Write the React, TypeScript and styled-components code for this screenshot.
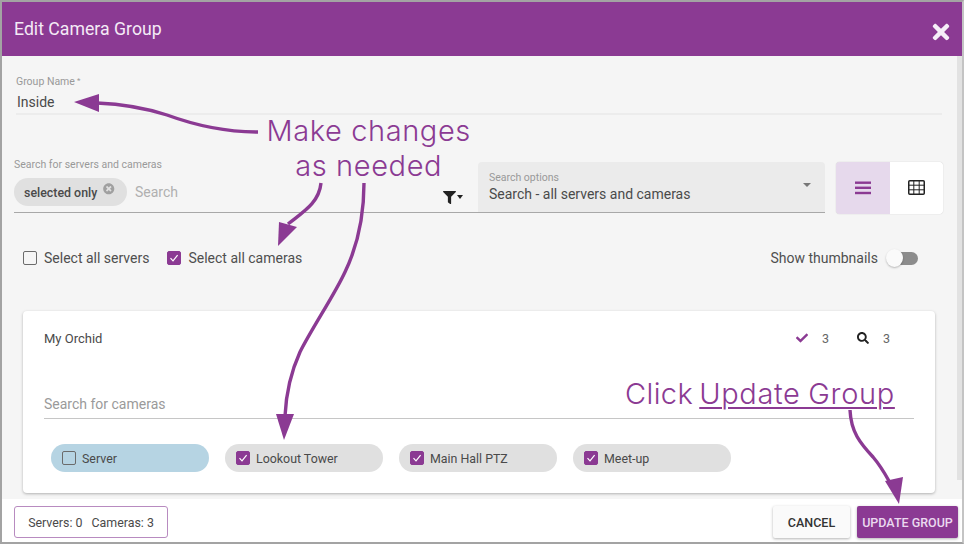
import * as React from 'react';
import styled, { createGlobalStyle } from 'styled-components';
import { FaCheck, FaFilter, FaSearch, FaTimes, FaTimesCircle } from 'react-icons/fa';

const PURPLE = '#8b3a93';

const GlobalStyle = createGlobalStyle`
  html, body {
    margin: 0;
    padding: 0;
    background: #fff;
  }
  body {
    font-family: Roboto, "Liberation Sans", sans-serif;
    color: #444;
  }
`;

const Frame = styled.div`
  position: relative;
  box-sizing: border-box;
  width: 964px;
  height: 544px;
  border: 2px solid #a3a3a3;
  border-right-color: #c4c4c4;
  display: flex;
  flex-direction: column;
  overflow: hidden;
`;

const Header = styled.header`
  flex: none;
  height: 54px;
  background: ${PURPLE};
  color: #f4eaf6;
  display: flex;
  align-items: center;
  justify-content: space-between;
  padding: 0 11px 0 12px;
  font-size: 17.7px;
`;

const CloseIcon = styled(FaTimes)`
  font-size: 24px;
  margin-top: 5px;
  margin-right: -2px;
  color: #f6eef8;
`;

const Body = styled.div`
  flex: 1;
  min-height: 0;
  display: flex;
  background: #f5f5f5;
`;

const Content = styled.main`
  flex: 1;
  min-width: 0;
  display: flex;
  flex-direction: column;
`;

const Scrollbar = styled.div`
  flex: none;
  width: 5px;
  margin-bottom: 19px;
  background: #e2e2e2;
`;

const GroupField = styled.div`
  margin: 19px 15px 0 14px;
  border-bottom: 2px solid #ececec;
`;

const SmallLabel = styled.div`
  font-size: 10.5px;
  line-height: 14px;
  color: #999;
`;

const Asterisk = styled.span`
  font-size: 8px;
  line-height: 0;
  vertical-align: 2px;
  margin-left: 2px;
`;

const GroupValue = styled.div`
  height: 24px;
  line-height: 27px;
  font-size: 14px;
  padding-left: 1px;
  color: #4a4a4a;
`;

const SearchRow = styled.div`
  margin: 47px 0 0 12px;
  display: flex;
  align-items: flex-start;
`;

const SearchField = styled.div`
  box-sizing: border-box;
  width: 464px;
  height: 55px;
  margin-top: -4px;
  border-bottom: 1px solid #a8a8a8;
`;

const SearchInputRow = styled.div`
  display: flex;
  align-items: center;
  margin-top: 6px;
  height: 28px;
`;

const FilterChip = styled.span`
  box-sizing: border-box;
  width: 113px;
  height: 28px;
  border-radius: 14px;
  background: #e0e0e0;
  padding-left: 10px;
  display: flex;
  align-items: center;
  gap: 6px;
  font-size: 12.4px;
  font-weight: 500;
  color: #4a4a4a;
`;

const ChipClose = styled(FaTimesCircle)`
  font-size: 11.5px;
  color: #a0a0a0;
  margin-top: -6px;
`;

const Placeholder = styled.span`
  font-size: 14px;
  color: #b0b0b0;
  margin-left: 8px;
`;

const FilterButton = styled.span`
  margin: 10px 15px 0 auto;
  display: flex;
  align-items: center;
  gap: 1px;
  color: #222;
  font-size: 13px;
`;

const Caret = styled.span<{ $color: string; $size: number }>`
  width: 0;
  height: 0;
  border-left: ${p => p.$size}px solid transparent;
  border-right: ${p => p.$size}px solid transparent;
  border-top: ${p => p.$size + 0.5}px solid ${p => p.$color};
`;

const SelectField = styled.div`
  box-sizing: border-box;
  width: 347px;
  height: 51px;
  padding: 9px 14px 0 11px;
  background: #ebebeb;
  border-bottom: 1px solid #a8a8a8;
  border-radius: 4px 4px 0 0;
  display: flex;
  align-items: flex-start;
  justify-content: space-between;
`;

const SelectValue = styled.div`
  font-size: 14px;
  line-height: 18px;
  color: #4a4a4a;
`;

const SelectCaret = styled.div`
  margin-top: 12px;
  display: flex;
`;

const ViewToggle = styled.div`
  margin-left: 11px;
  width: 107px;
  height: 52px;
  display: flex;
  border-radius: 4px;
  overflow: hidden;
  box-shadow: 0 0 1px rgba(0, 0, 0, 0.3);
`;

const ViewButton = styled.span<{ $active?: boolean }>`
  flex: 1;
  display: flex;
  align-items: center;
  justify-content: center;
  background: ${p => (p.$active ? '#e6d9ec' : '#fff')};
  padding-bottom: 1px;
`;

const CheckRow = styled.div`
  margin-top: 34px;
  height: 20px;
  padding: 0 39px 0 21px;
  display: flex;
  align-items: center;
  font-size: 14px;
  color: #4f4f4f;
`;

const CheckLabel = styled.label`
  display: flex;
  align-items: center;
  gap: 7px;
  margin-right: 18px;
`;

const Box = styled.span<{ $checked?: boolean }>`
  box-sizing: border-box;
  flex: none;
  width: 14px;
  height: 14px;
  border-radius: 2px;
  border: ${p => (p.$checked ? `1px solid ${PURPLE}` : '1.5px solid #6b6b6b')};
  background: ${p => (p.$checked ? PURPLE : 'transparent')};
  display: flex;
  align-items: center;
  justify-content: center;
`;

const ThumbLabel = styled.span`
  margin-left: auto;
  margin-right: 12px;
`;

const SwitchTrack = styled.span`
  position: relative;
  width: 28px;
  height: 13px;
  border-radius: 7px;
  background: #8c8c8c;
`;

const SwitchThumb = styled.span`
  position: absolute;
  left: -4px;
  top: -3px;
  width: 17px;
  height: 18px;
  border-radius: 50%;
  background: #fafafa;
  box-shadow: 0 1px 2px rgba(0, 0, 0, 0.25);
`;

const Card = styled.section`
  box-sizing: border-box;
  margin: 43px 0 0 21px;
  width: 912px;
  height: 182px;
  padding: 16px 21px 0;
  background: #fff;
  border-radius: 4px;
  box-shadow: 0 1px 3px rgba(0, 0, 0, 0.28);
`;

const CardHead = styled.div`
  height: 22px;
  display: flex;
  align-items: center;
  justify-content: space-between;
  font-size: 13px;
  color: #4a4a4a;
`;

const Stats = styled.div`
  display: flex;
  align-items: center;
  padding-right: 24px;
  font-size: 12.5px;
  color: #666;
`;

const Stat = styled.span`
  display: flex;
  align-items: center;
  gap: 14px;
  margin-left: 28px;
`;

const CameraSearch = styled.div`
  margin-top: 41px;
  height: 29px;
  box-sizing: border-box;
  border-bottom: 1px solid #c6c6c6;
  font-size: 14px;
  line-height: 28px;
  color: #9a9a9a;
`;

const ChipRow = styled.div`
  margin: 25px 0 0 7px;
  display: flex;
  gap: 16px;
`;

const CameraChip = styled.span<{ $server?: boolean }>`
  box-sizing: border-box;
  width: 158px;
  height: 28px;
  border-radius: 14px;
  padding-left: 11px;
  display: flex;
  align-items: center;
  gap: 6px;
  background: ${p => (p.$server ? '#b6d4e3' : '#e0e0e0')};
  font-size: 12.4px;
  color: #4a4a4a;
`;

const Footer = styled.footer`
  flex: none;
  height: 43px;
  background: #fff;
  padding: 7px 4px 0 12px;
  box-sizing: border-box;
  display: flex;
  align-items: flex-start;
`;

const Summary = styled.div`
  box-sizing: border-box;
  width: 154px;
  height: 32px;
  border: 1px solid #b88bc0;
  border-radius: 3px;
  display: flex;
  align-items: center;
  justify-content: center;
  gap: 9px;
  font-size: 12.4px;
  color: #4a4a4a;
`;

const Button = styled.button<{ $primary?: boolean }>`
  height: 32px;
  border: 0;
  border-radius: 2px;
  font-family: inherit;
  font-size: 12.5px;
  font-weight: 500;
  padding: 1px 0 0;
  background: ${p => (p.$primary ? PURPLE : '#fafafa')};
  color: ${p => (p.$primary ? '#ead9ef' : '#333')};
  box-shadow: 0 1px 3px rgba(0, 0, 0, 0.3);
`;

const CancelButton = styled(Button)`
  margin-left: auto;
  width: 77px;
`;

const UpdateButton = styled(Button)`
  margin-left: 7px;
  width: 101px;
`;

const Arrows = styled.svg`
  position: absolute;
  left: -2px;
  top: -2px;
  width: 964px;
  height: 544px;
  pointer-events: none;
`;

const Callout = styled.div<{ $left: number; $top: number }>`
  position: absolute;
  left: ${p => p.$left}px;
  top: ${p => p.$top}px;
  font-family: Inter, "Liberation Sans", sans-serif;
  font-weight: 300;
  font-size: 29px;
  line-height: 35px;
  letter-spacing: 0.6px;
  text-align: center;
  white-space: nowrap;
  color: ${PURPLE};
`;

const ClickCallout = styled(Callout)`
  letter-spacing: 0.4px;
  word-spacing: -2.5px;
`;

const CalloutLink = styled.span`
  text-decoration: underline;
  text-decoration-thickness: 2px;
  text-underline-offset: 3px;
  letter-spacing: 0.65px;
  word-spacing: -1px;
`;

const Tick = () => (
  <svg width="10" height="10" viewBox="0 0 10 10" fill="none" stroke="#fff" strokeWidth="1.2">
    <path d="M1.5 5.2 L4 7.8 L8.6 2.2" />
  </svg>
);

const ListIcon = () => (
  <svg width="16" height="14" viewBox="0 0 16 14" fill={PURPLE}>
    <rect x="0" y="0.5" width="16" height="2.4" />
    <rect x="0" y="5.6" width="16" height="2.4" />
    <rect x="0" y="10.8" width="16" height="2.4" />
  </svg>
);

const GridIcon = () => (
  <svg width="17" height="15" viewBox="0 0 17 15" fill="none" stroke="#222">
    <rect x="0.75" y="0.75" width="15.5" height="13.5" rx="1" strokeWidth="1.5" />
    <path d="M1 5.2 H16 M1 9.8 H16 M5.8 1 V14 M11.2 1 V14" strokeWidth="1" />
  </svg>
);

const cameras = ['Lookout Tower', 'Main Hall PTZ', 'Meet-up'];

export default function App() {
  return (
    <Frame>
      <GlobalStyle />
      <Header>
        <span>Edit Camera Group</span>
        <CloseIcon />
      </Header>
      <Body>
        <Content>
          <GroupField>
            <SmallLabel>
              Group Name<Asterisk>*</Asterisk>
            </SmallLabel>
            <GroupValue>Inside</GroupValue>
          </GroupField>
          <SearchRow>
            <SearchField>
              <SmallLabel>Search for servers and cameras</SmallLabel>
              <SearchInputRow>
                <FilterChip>
                  selected only
                  <ChipClose />
                </FilterChip>
                <Placeholder>Search</Placeholder>
                <FilterButton>
                  <FaFilter />
                  <Caret $color="#222" $size={3.5} />
                </FilterButton>
              </SearchInputRow>
            </SearchField>
            <SelectField>
              <div>
                <SmallLabel>Search options</SmallLabel>
                <SelectValue>Search - all servers and cameras</SelectValue>
              </div>
              <SelectCaret>
                <Caret $color="#777" $size={4} />
              </SelectCaret>
            </SelectField>
            <ViewToggle>
              <ViewButton $active>
                <ListIcon />
              </ViewButton>
              <ViewButton>
                <GridIcon />
              </ViewButton>
            </ViewToggle>
          </SearchRow>
          <CheckRow>
            <CheckLabel>
              <Box />
              Select all servers
            </CheckLabel>
            <CheckLabel>
              <Box $checked>
                <Tick />
              </Box>
              Select all cameras
            </CheckLabel>
            <ThumbLabel>Show thumbnails</ThumbLabel>
            <SwitchTrack>
              <SwitchThumb />
            </SwitchTrack>
          </CheckRow>
          <Card>
            <CardHead>
              <span>My Orchid</span>
              <Stats>
                <Stat>
                  <FaCheck color={PURPLE} size={12} />3
                </Stat>
                <Stat>
                  <FaSearch color="#222" size={12} />3
                </Stat>
              </Stats>
            </CardHead>
            <CameraSearch>Search for cameras</CameraSearch>
            <ChipRow>
              <CameraChip $server>
                <Box />
                Server
              </CameraChip>
              {cameras.map(name => (
                <CameraChip key={name}>
                  <Box $checked>
                    <Tick />
                  </Box>
                  {name}
                </CameraChip>
              ))}
            </ChipRow>
          </Card>
        </Content>
        <Scrollbar />
      </Body>
      <Footer>
        <Summary>
          <span>Servers: 0</span>
          <span>Cameras: 3</span>
        </Summary>
        <CancelButton>CANCEL</CancelButton>
        <UpdateButton $primary>UPDATE GROUP</UpdateButton>
      </Footer>

      <Arrows viewBox="0 0 964 544">
        <g fill="none" stroke={PURPLE} strokeWidth="3.4" strokeLinecap="butt">
          <path d="M258 132 C226 132 197 126 167 115 C142 107 122 104 97 103" />
          <path d="M321 183 C319 203 303 212 288 224" />
          <path d="M364 183 C364 215 358 245 345 272 C335 294 312 328 300 352 C290 374 286 395 285 416" />
          <path d="M850 410 C851 432 860 443 873 457 C879 464 884 472 889 481" />
        </g>
        <g fill={PURPLE}>
          <polygon points="74,102 99,94 99,112" />
          <polygon points="278,246 279,222 297,227" />
          <polygon points="284,440 276,414 294,414" />
          <polygon points="899,504 885,481 903,477" />
        </g>
      </Arrows>
      <Callout $left={264.5} $top={111}>
        Make changes
        <br />
        as needed
      </Callout>
      <ClickCallout $left={623} $top={374}>
        Click <CalloutLink>Update Group</CalloutLink>
      </ClickCallout>
    </Frame>
  );
}
